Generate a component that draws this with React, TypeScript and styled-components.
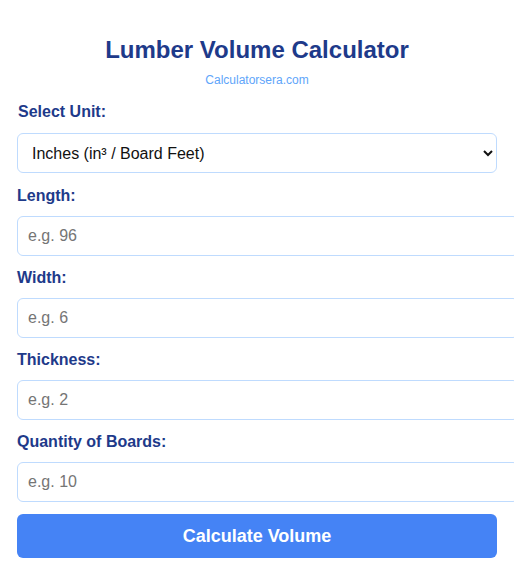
import React from "react"
import styled, { createGlobalStyle } from "styled-components"

const GlobalStyle = createGlobalStyle`
  body {
    margin: 0;
    background: #ffffff;
    font-family: "Liberation Sans", Arial, sans-serif;
    overflow-x: hidden;
  }
`

const fields = [
  { label: "Length:", placeholder: "e.g. 96" },
  { label: "Width:", placeholder: "e.g. 6" },
  { label: "Thickness:", placeholder: "e.g. 2" },
  { label: "Quantity of Boards:", placeholder: "e.g. 10" },
]

const App: React.FunctionComponent = () => {
  return (
    <>
      <GlobalStyle />
      <Wrap>
        <Title>Lumber Volume Calculator</Title>
        <Source>Calculatorsera.com</Source>

        <Label htmlFor="unit" $first>
          Select Unit:
        </Label>
        <Select id="unit" defaultValue="in">
          <option value="in">Inches (in³ / Board Feet)</option>
          <option value="cm">Centimeters (cm³)</option>
          <option value="ft">Feet (ft³)</option>
          <option value="m">Meters (m³)</option>
        </Select>

        {fields.map((f) => (
          <React.Fragment key={f.label}>
            <Label>{f.label}</Label>
            <Field type="number" placeholder={f.placeholder} />
          </React.Fragment>
        ))}

        <Button type="button">Calculate Volume</Button>
      </Wrap>
    </>
  )
}

const Wrap = styled.div`
  width: 480px;
  margin: 0 auto;
  padding-top: 36px;
`

const Title = styled.h2`
  margin: 0;
  text-align: center;
  color: #1e3a8a;
  font-size: 24px;
  font-weight: 700;
  line-height: 28px;
`

const Source = styled.div`
  margin-top: 9px;
  text-align: center;
  color: #60a5fa;
  font-size: 12px;
  line-height: 14px;
`

const Label = styled.label<{ $first?: boolean }>`
  display: block;
  margin: ${(p) => (p.$first ? "15px 0 0 1px" : "12px 0 0")};
  color: #1e3a8a;
  font-size: 16px;
  font-weight: 700;
  line-height: 20px;
`

const Select = styled.select`
  display: block;
  width: 100%;
  height: 40px;
  box-sizing: border-box;
  padding: 0 10px;
  margin: 11px 0 13px;
  border: 1px solid #bfdbfe;
  border-radius: 6px;
  background: #ffffff;
  color: #111111;
  font-family: "Liberation Sans", Arial, sans-serif;
  font-size: 16px;
`

const Field = styled.input`
  display: block;
  width: 100%;
  height: 18px;
  padding: 10px;
  margin-top: 10px;
  border: 1px solid #bfdbfe;
  border-radius: 6px;
  color: #111111;
  font-family: "Liberation Sans", Arial, sans-serif;
  font-size: 16px;

  &::placeholder {
    color: #757575;
  }
`

const Button = styled.button`
  display: block;
  width: 100%;
  height: 44px;
  margin-top: 12px;
  border: none;
  border-radius: 6px;
  background: #4583f5;
  color: #ffffff;
  font-family: "Liberation Sans", Arial, sans-serif;
  font-size: 18px;
  font-weight: 700;
`

export default App
